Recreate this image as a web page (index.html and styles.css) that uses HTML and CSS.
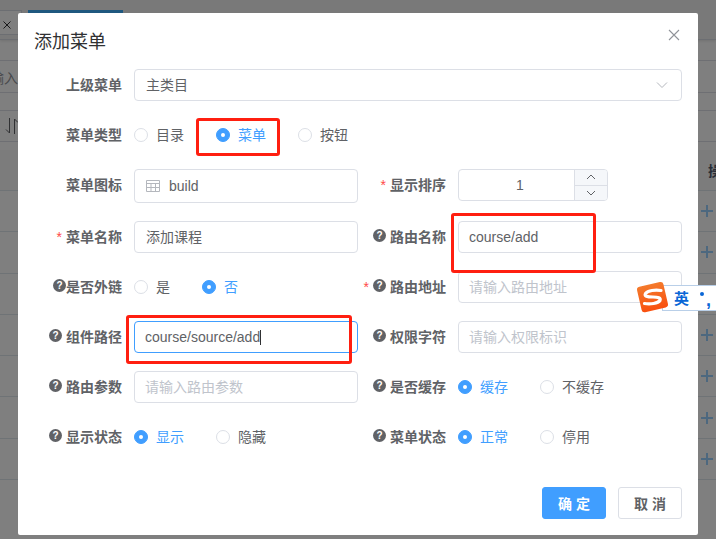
FILE: index.html
```html
<!DOCTYPE html>
<html lang="zh-CN">
<head>
<meta charset="utf-8">
<title>添加菜单</title>
<link rel="stylesheet" href="styles.css">
</head>
<body>
<div class="page">
  <div class="tabs">
    <div class="tab"><svg class="tab-x" width="8" height="8" viewBox="0 0 8 8"><path d="M.5.500L7.500 7.500M7.500.500L.5 7.500" fill="none" stroke="#303133" stroke-width="1"/></svg></div>
    <div class="tab-active"></div>
  </div>
  <div class="search"><span class="search-text">请输入</span></div>
  <div class="tools">
    <svg class="sort-icon" width="14" height="18" viewBox="0 0 14 18"><path d="M4.500 1V16L1 12.500M9.500 17V2L13 5.500" fill="none" stroke="#606266" stroke-width="1"/></svg>
  </div>
  <div class="table">
    <div class="thead"><span class="th-text">操作</span></div>
    <div class="tr"><svg class="plus" width="12" height="12" viewBox="0 0 12 12"><path d="M6 0V12M0 6H12"/></svg></div>
    <div class="tr"><svg class="plus" width="12" height="12" viewBox="0 0 12 12"><path d="M6 0V12M0 6H12"/></svg></div>
    <div class="tr"><svg class="plus" width="12" height="12" viewBox="0 0 12 12"><path d="M6 0V12M0 6H12"/></svg></div>
    <div class="tr"><svg class="plus" width="12" height="12" viewBox="0 0 12 12"><path d="M6 0V12M0 6H12"/></svg></div>
    <div class="tr"><svg class="plus" width="12" height="12" viewBox="0 0 12 12"><path d="M6 0V12M0 6H12"/></svg></div>
    <div class="tr"><svg class="plus" width="12" height="12" viewBox="0 0 12 12"><path d="M6 0V12M0 6H12"/></svg></div>
    <div class="tr"><svg class="plus" width="12" height="12" viewBox="0 0 12 12"><path d="M6 0V12M0 6H12"/></svg></div>
  </div>
</div>
<div class="overlay"></div>

<div class="dialog">
  <header class="dialog-header">
    <h2 class="dialog-title">添加菜单</h2>
    <svg class="dialog-close" width="12" height="12" viewBox="0 0 12 12"><path d="M1 1L11 11M11 1L1 11" fill="none" stroke="#909399" stroke-width="1.100"/></svg>
  </header>

  <form class="form">
    <div class="item span2">
      <label class="label">上级菜单</label>
      <div class="input select"><span class="zh value">主类目</span>
        <svg class="chevron" width="12" height="8" viewBox="0 0 12 8"><path d="M1 1.500L6 6.500L11 1.500" fill="none" stroke="#b4b7bd" stroke-width="1"/></svg>
      </div>
    </div>

    <div class="item span2">
      <label class="label">菜单类型</label>
      <div class="radios">
        <span class="radio"><i class="dot"></i>目录</span>
        <span class="radio on"><i class="dot"></i>菜单</span>
        <span class="radio"><i class="dot"></i>按钮</span>
      </div>
    </div>

    <div class="item">
      <label class="label">菜单图标</label>
      <div class="input tall">
        <svg class="table-icon" width="14" height="12" viewBox="0 0 14 12"><path d="M.5.500H13.500V11.500H.5ZM.5 3.500H13.500M.5 7.500H13.500M5 3.500V11.500M9.500 3.500V11.500" fill="none" stroke="#b4b7bd" stroke-width="1"/></svg>
        <span>build</span>
      </div>
    </div>
    <div class="item">
      <label class="label"><b class="star">*</b>显示排序</label>
      <div class="number">
        <span class="number-value">1</span>
        <div class="steps">
          <span class="step"><svg width="10" height="6" viewBox="0 0 10 6"><path d="M1 5L5 1L9 5" fill="none" stroke="#606266" stroke-width="1"/></svg></span>
          <span class="step"><svg width="10" height="6" viewBox="0 0 10 6"><path d="M1 1L5 5L9 1" fill="none" stroke="#606266" stroke-width="1"/></svg></span>
        </div>
      </div>
    </div>

    <div class="item">
      <label class="label"><b class="star">*</b>菜单名称</label>
      <div class="input"><span class="zh value">添加课程</span></div>
    </div>
    <div class="item">
      <label class="label"><i class="help">?</i>路由名称</label>
      <div class="input"><span>course/add</span></div>
    </div>

    <div class="item">
      <label class="label"><i class="help tight">?</i>是否外链</label>
      <div class="radios">
        <span class="radio"><i class="dot"></i>是</span>
        <span class="radio on"><i class="dot"></i>否</span>
      </div>
    </div>
    <div class="item">
      <label class="label"><b class="star">*</b><i class="help">?</i>路由地址</label>
      <div class="input ph"><span class="zh">请输入路由地址</span></div>
    </div>

    <div class="item">
      <label class="label"><i class="help">?</i>组件路径</label>
      <div class="input focus"><span>course/source/add</span><i class="caret"></i></div>
    </div>
    <div class="item">
      <label class="label"><i class="help">?</i>权限字符</label>
      <div class="input ph"><span class="zh">请输入权限标识</span></div>
    </div>

    <div class="item">
      <label class="label"><i class="help">?</i>路由参数</label>
      <div class="input ph"><span class="zh">请输入路由参数</span></div>
    </div>
    <div class="item">
      <label class="label"><i class="help">?</i>是否缓存</label>
      <div class="radios">
        <span class="radio on"><i class="dot"></i>缓存</span>
        <span class="radio"><i class="dot"></i>不缓存</span>
      </div>
    </div>

    <div class="item">
      <label class="label"><i class="help">?</i>显示状态</label>
      <div class="radios">
        <span class="radio on"><i class="dot"></i>显示</span>
        <span class="radio"><i class="dot"></i>隐藏</span>
      </div>
    </div>
    <div class="item">
      <label class="label"><i class="help">?</i>菜单状态</label>
      <div class="radios">
        <span class="radio on"><i class="dot"></i>正常</span>
        <span class="radio"><i class="dot"></i>停用</span>
      </div>
    </div>
  </form>

  <footer class="dialog-footer">
    <button class="btn primary" type="button">确 定</button>
    <button class="btn" type="button">取 消</button>
  </footer>
</div>

<div class="mark mark-radio"></div>
<div class="mark mark-route"></div>
<div class="mark mark-path"></div>

<div class="ime">
  <span class="ime-text">英</span>
  <span class="ime-dot"></span>
  <span class="ime-comma">,</span>
  <svg class="ime-logo" width="34" height="32" viewBox="0 0 34 32">
    <defs><linearGradient id="g" x1="0" y1="0" x2="0" y2="1"><stop offset="0" stop-color="#f47a2c"/><stop offset="1" stop-color="#f9500f"/></linearGradient></defs>
    <rect x="3" y="3" width="27" height="26" rx="3" transform="rotate(-13 17 16)" fill="url(#g)"/>
    <path d="M25 9.500C19 8.500 12 9.500 9.500 12.500C8 15 11 16 17 16C22 16 25 17 24 19.500C22 22.500 14 23.500 8.500 22.500" fill="none" stroke="#fff" stroke-width="3.200" stroke-linecap="round"/>
  </svg>
</div>
</body>
</html>
```
FILE: styles.css
```css
* { box-sizing: border-box; }
html, body { margin: 0; height: 100%; overflow: hidden; }
body {
  width: 716px;
  height: 539px;
  background: #fff;
  font: 14px "Liberation Sans", "Noto Sans CJK SC", sans-serif;
  color: #606266;
  position: relative;
}

/* page behind the dialog */
.page { height: 539px; overflow: hidden; }
.tabs {
  height: 40px;
  padding-top: 10px;
  display: flex;
  gap: 6px;
  background: #f2f2f2;
  border-bottom: 1px solid #d8dce5;
  box-shadow: 0 1px 3px rgba(0,0,0,.12);
}
.tab {
  width: 22px;
  height: 25px;
  background: #fff;
  border: 1px solid #d8dce5;
  border-left: 0;
  display: flex;
  align-items: center;
  padding: 4px 0 0 3px;
}
.tab-active { width: 95px; height: 4px; background: #3fb0fe; }
.search {
  height: 33px;
  margin-top: 20px;
  border-top: 1px solid #dcdfe6;
  border-bottom: 1px solid #dcdfe6;
  display: flex;
  align-items: center;
  margin-left: -24px;
  white-space: nowrap;
}
.search-text { color: #909399; }
.tools {
  height: 32px;
  margin-top: 17px;
  border-top: 1px solid #dcdfe6;
  border-bottom: 1px solid #dcdfe6;
  display: flex;
  align-items: center;
  padding-left: 5px;
}
.table { margin-top: 8px; }
.thead {
  height: 41px;
  background: #f8f8f9;
  border-bottom: 1px solid #dfe6ec;
  display: flex;
  align-items: center;
  justify-content: flex-end;
  overflow: hidden;
}
.th-text { font-weight: 700; color: #515a6e; margin-right: -20px; }
.tr {
  height: 41.3px;
  border-bottom: 1px solid #dfe6ec;
  display: flex;
  align-items: center;
  justify-content: flex-end;
  padding-right: 3px;
}
.plus path { fill: none; stroke: #9ad0ff; stroke-width: 2; }

.overlay {
  position: absolute;
  inset: 0;
  background: rgba(0,0,0,.5);
}

/* dialog */
.dialog {
  position: absolute;
  left: 18px;
  top: 13px;
  width: 680px;
  height: 522px;
  background: #fff;
  border-radius: 2px;
  display: flex;
  flex-direction: column;
}
.dialog-header {
  height: 56px;
  padding: 16px 18px 0 16px;
  display: flex;
  justify-content: space-between;
  align-items: flex-start;
}
.dialog-title {
  margin: 1px 0 0;
  font-size: 18px;
  font-weight: 400;
  line-height: 24px;
  color: #303133;
}

.form {
  padding: 0 16px;
  display: grid;
  grid-template-columns: 324px 324px;
  align-items: start;
}
.item { display: flex; margin-bottom: 18px; min-width: 0; }
.span2 { grid-column: 1 / 3; }
.label {
  flex: none;
  width: 100px;
  padding-right: 12px;
  text-align: right;
  line-height: 32px;
  font-weight: 700;
  color: #606266;
  white-space: nowrap;
}
.star {
  font-weight: 400;
  color: #ff4949;
  margin-right: 4px;
}
.help {
  display: inline-block;
  width: 13px;
  height: 13px;
  margin-right: 4px;
  border-radius: 50%;
  background: #606266;
  color: #fff;
  font: 700 10px/13px "Liberation Sans", sans-serif;
  text-align: center;
  vertical-align: 3px;
}
.help.tight { margin-right: 0; }

.input {
  flex: 1;
  min-width: 0;
  height: 32px;
  padding: 0 10px;
  border: 1px solid #dcdfe6;
  border-radius: 4px;
  display: flex;
  align-items: center;
  background: #fff;
  color: #606266;
}
.zh { padding-bottom: 2px; }
.value { margin-left: 1px; }
.input.tall { height: 34px; }
.input.ph { color: #c0c4cc; }
.input.focus { border-color: #409eff; }
.select { justify-content: space-between; }
.chevron { margin-right: 3px; }
.table-icon { margin: 0 9px 0 1px; }
.caret { width: 1px; height: 15px; background: #303133; }

.radios { display: flex; height: 32px; align-items: center; }
.radio {
  display: inline-flex;
  align-items: center;
  margin-right: 32px;
  padding-bottom: 2px;
  white-space: nowrap;
}
.dot {
  width: 14px;
  height: 14px;
  margin: 2px 8px 0 0;
  border: 1px solid #dcdfe6;
  border-radius: 50%;
  background: #fff;
  position: relative;
}
.radio.on { color: #409eff; }
.radio.on .dot { background: #409eff; border-color: #409eff; }
.radio.on .dot::after {
  content: "";
  position: absolute;
  left: 4px;
  top: 4px;
  width: 4px;
  height: 4px;
  border-radius: 50%;
  background: #fff;
}

.number {
  width: 150px;
  height: 32px;
  border: 1px solid #dcdfe6;
  border-radius: 4px;
  display: flex;
  overflow: hidden;
}
.number-value { flex: 1; text-align: center; line-height: 30px; padding-left: 7px; }
.steps {
  width: 33px;
  background: #f5f7fa;
  border-left: 1px solid #dcdfe6;
  display: flex;
  flex-direction: column;
}
.step { flex: 1; display: flex; align-items: center; justify-content: center; }
.step + .step { border-top: 1px solid #dcdfe6; }

.dialog-footer {
  margin-top: auto;
  padding: 0 16px 16px;
  display: flex;
  justify-content: flex-end;
  gap: 12px;
}
.btn {
  width: 64px;
  height: 32px;
  padding: 0;
  border: 1px solid #dcdfe6;
  border-radius: 3px;
  background: #fff;
  color: #606266;
  font: 700 14px "Liberation Sans", "Noto Sans CJK SC", sans-serif;
}
.btn.primary { background: #409eff; border-color: #409eff; color: #fff; }

/* annotations over the screenshot */
.mark {
  position: absolute;
  border: 3px solid #ff1f10;
  border-radius: 3px;
}
.mark-radio { left: 196px; top: 118px; width: 84px; height: 38px; }
.mark-route { left: 451px; top: 213px; width: 145px; height: 60px; }
.mark-path { left: 126px; top: 315px; width: 226px; height: 49px; }

/* input method bar */
.ime {
  position: absolute;
  left: 662px;
  top: 285px;
  width: 54px;
  height: 26px;
  background: #fff;
  border: 1px solid #b9cfe8;
  border-right: 0;
  color: #0a66d6;
}
.ime-logo { position: absolute; left: -27px; top: -5px; }
.ime-text { position: absolute; left: 11px; top: 2px; font: 700 15px/20px "Noto Sans CJK SC", sans-serif; }
.ime-dot { position: absolute; left: 37px; top: 6px; width: 4px; height: 4px; border-radius: 50%; background: #0a66d6; }
.ime-comma { position: absolute; left: 43px; top: 2px; font: 700 18px/24px "Liberation Sans", sans-serif; }
```
